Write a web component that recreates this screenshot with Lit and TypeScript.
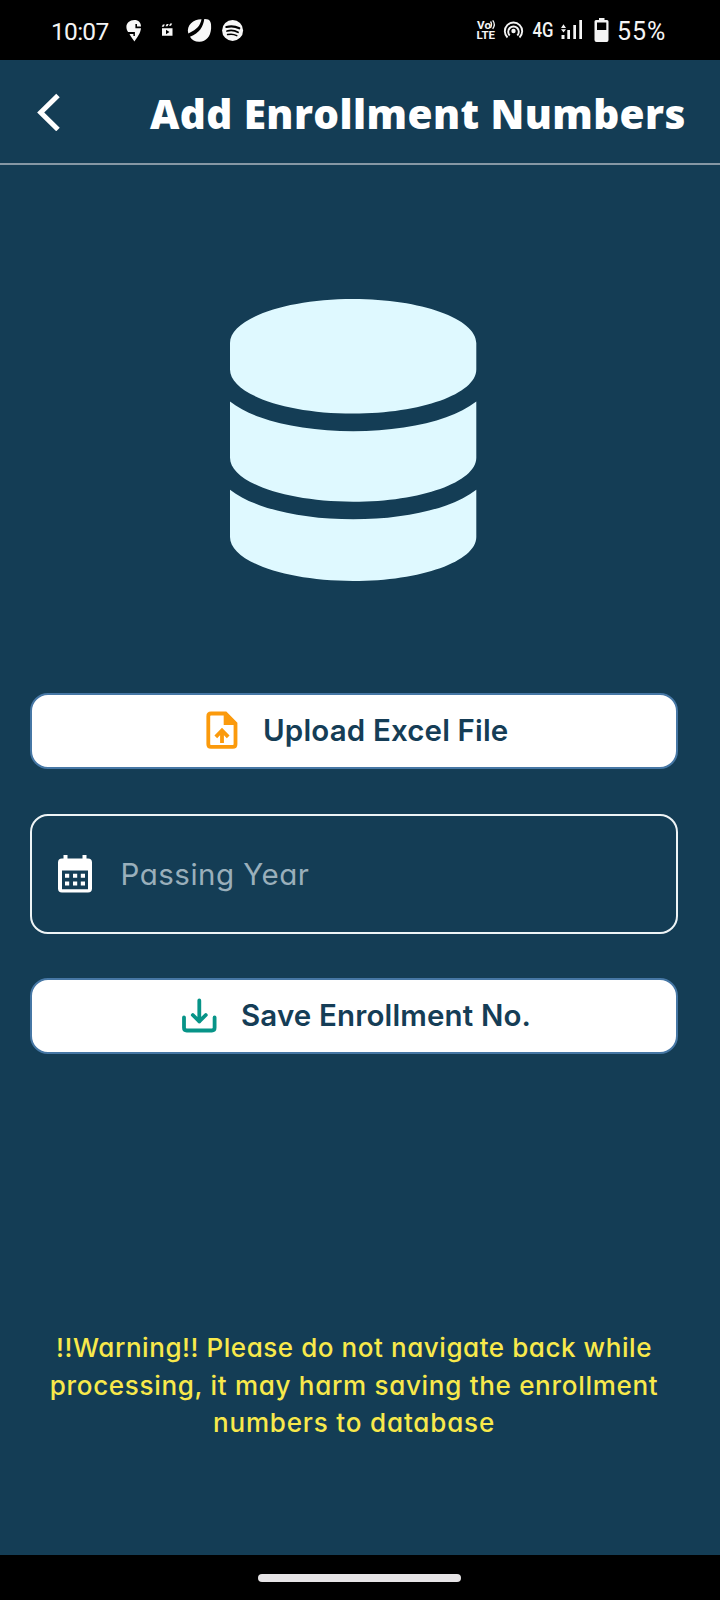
import { LitElement, html, css } from "lit";
import { customElement } from "lit/decorators.js";

@customElement("status-bar")
class StatusBar extends LitElement {
  static styles = css`
    :host { display: flex; align-items: center; height: 60px; background: #000; color: #f4f4f4; font-family: Roboto, sans-serif; white-space: nowrap; }
    svg { display: block; flex: none; }
    .time { width: 74px; margin-left: 51px; font-size: 24.5px; line-height: 30px; padding-top: 3px; letter-spacing: -0.7px; }
    .left { flex: none; }
    .right { margin-left: auto; margin-right: 7px; flex: none; }
    .pct { width: 104px; margin-right: -1px; font-size: 25px; line-height: 30px; padding-top: 4px; letter-spacing: 1px; }
    .tiny { font: 700 11px Roboto, sans-serif; fill: #f4f4f4; }
    .net { font: 500 19.5px Roboto, sans-serif; fill: #f4f4f4; }
  `;
  render() {
    return html`
      <span class="time">10:07</span>
      <svg class="left" width="125" height="60" viewBox="125 0 125 60" fill="#f8f8f8">
        <path d="M134.5 20c4 0 6.4 2.6 6.5 6.5h-4v-2.6h-1.6v4.3H141c-.5 5-4 9.500-6.600 13.200-2.100-2.900-4.100-5.900-4.900-7.500h3.900v2.100h1.500v-4h-6.800C124 26 127.800 20 134.500 20z" />
        <path d="M162 28.300h10.500v7.400H162zM161.700 26.800l1.200-2.200h2l-1.200 2.200zM165.500 26.300l1.200-2.200h2l-1.200 2.200zM169 25.800l1.200-2.200h2l-1.200 2.200z" />
        <path d="M166 29.800l3.500 2.200-3.500 2.200z" fill="#000" />
        <path d="M188.300 33.500C186 25 194 19 201.500 19.200c-1.300 6-3.600 9.600-13.200 14.300zM204.300 19.100c6-.2 7.200 3 6.800 9.500-.5 8-5 13-11.500 13.200-4.500.1-7.600-1.300-9.600-5C199.500 33 203.200 27 204.300 19.100z" />
        <circle cx="232.600" cy="30.400" r="10.500" />
        <g fill="none" stroke="#000" stroke-linecap="round"><path d="M226.300 27q7-1.800 13 1.300" stroke-width="2.100" /><path d="M227 31q6-1.500 11 1.200" stroke-width="1.800" /><path d="M227.600 34.600q5-1.200 9.200 1" stroke-width="1.500" /></g>
      </svg>
      <svg class="right" width="140" height="60" viewBox="470 0 140 60" fill="#f4f4f4">
        <text class="tiny" x="477" y="28.500" textLength="14" lengthAdjust="spacingAndGlyphs">Vo</text>
        <text class="tiny" x="476.500" y="39" textLength="18.500" lengthAdjust="spacingAndGlyphs">LTE</text>
        <g fill="none" stroke="#f4f4f4" stroke-width="1.300"><path d="M490.500 21.500q2 2.700 0 6.500M492.700 20.300q3.200 4 0 8.500" /></g>
        <circle cx="513.500" cy="31" r="2.200" />
        <g fill="none" stroke="#f4f4f4" stroke-width="1.900"><path d="M509.700 35.500a5.300 5.300 0 1 1 7.600 0" /><path d="M507.500 37.500a8.700 8.700 0 1 1 12 0" /></g>
        <text class="net" x="532.500" y="36.500" textLength="21" lengthAdjust="spacingAndGlyphs">4G</text>
        <path d="M561 28l2.500-3.800L566 28zM561 29.200h5l-2.500 3.300zM561.500 35h3v4h-3zM567.300 30h2.700v9h-2.700zM573.300 25h2.700v14h-2.700zM579.300 20h2.700v19h-2.700z" />
        <path fill-rule="evenodd" d="M599 18h5.500v2h2.500q1.500 0 1.500 1.500v18.500q0 2-1.800 2h-10.200q-2 0-2-2v-18.500q0-1.500 1.500-1.500h3zM597 22.500v7.500h9.300v-7.500z" />
      </svg>
      <span class="pct">55%</span>
    `;
  }
}

@customElement("app-root")
class AppRoot extends LitElement {
  static styles = css`
    :host { display: flex; flex-direction: column; width: 720px; height: 1600px; background: #143d55; overflow: hidden; }
    * { box-sizing: border-box; }
    svg { display: block; flex: none; }
    .bar { display: flex; align-items: center; height: 105px; border-bottom: 2px solid #8698a5; flex: none; }
    .back { margin-left: 36px; margin-top: 1px; }
    .title { margin: 0 0 0 89px; padding-top: 5px; font: 800 40.500px/56px "Open Sans", sans-serif; letter-spacing: 0.42px; color: #fff; white-space: nowrap; }
    main { flex: 1; display: flex; flex-direction: column; padding: 0 42px 0 30px; }
    .db { margin: 134px 0 0 200.400px; }
    .btn { display: flex; align-items: center; height: 76px; border: 2px solid #4677a5; border-radius: 18px; background: #fff; color: #153d56; padding: 0 0 2px; font: 600 29.500px/36px Inter, sans-serif; letter-spacing: 0.15px; white-space: nowrap; flex: none; text-align: left; }
    .upload { margin-top: 112px; padding-left: 174px; gap: 25px; }
    .save { margin-top: 44px; padding-left: 150px; gap: 24px; }
    .field { display: flex; align-items: center; gap: 28.500px; height: 120px; margin-top: 45px; padding-left: 26px; border: 2px solid #eef4f6; border-radius: 18px; font: 430 29.500px/36px Inter, sans-serif; letter-spacing: 0.5px; font-feature-settings: "cv11"; color: #9aafbb; flex: none; }
    .warn { margin: 275px 0 0; text-align: center; font: 450 26px/37.500px Inter, sans-serif; font-feature-settings: "cv11"; color: #f8e94b; white-space: nowrap; }
    .line { display: block; letter-spacing: 0.56px; }
    .middle { letter-spacing: 0.7px; }
    .last { letter-spacing: 0.84px; }
    .nav { height: 45px; background: #000; display: flex; justify-content: center; align-items: center; padding: 0 2px 0 0; flex: none; }
    .pill { width: 203px; height: 8px; border-radius: 4px; background: #e6e4e6; }
  `;
  render() {
    return html`
      <status-bar></status-bar>
      <header class="bar">
        <svg class="back" width="25" height="38" viewBox="36 93 25 38"><path d="M58 95.500L40.700 112.500L58 129.500" fill="none" stroke="#fff" stroke-width="5" /></svg>
        <h1 class="title">Add Enrollment Numbers</h1>
      </header>
      <main>
        <svg class="db" width="246.300" height="282" viewBox="0 0 448 512" preserveAspectRatio="none" fill="#dff9ff">
          <path d="M448 80v48c0 44.200-100.300 80-224 80S0 172.200 0 128V80C0 35.800 100.300 0 224 0S448 35.800 448 80zM393.200 214.700c20.800-7.400 39.900-16.900 54.800-28.600V288c0 44.200-100.300 80-224 80S0 332.200 0 288V186.100c14.900 11.800 34 21.200 54.800 28.600C99.700 230.700 159.500 240 224 240s124.300-9.300 169.200-25.300zM0 346.100c14.900 11.800 34 21.200 54.800 28.600C99.700 390.700 159.500 400 224 400s124.300-9.300 169.200-25.300c20.800-7.400 39.900-16.900 54.800-28.600V432c0 44.200-100.300 80-224 80S0 476.200 0 432V346.100z" />
        </svg>
        <button class="btn upload">
          <svg width="32" height="38" viewBox="206 711 32 38">
            <path d="M225.500 713.500H211q-2.700 0-2.700 2.700v28q0 2.700 2.700 2.700h21.800q2.700 0 2.700-2.700v-20.700z" fill="none" stroke="#fb9a0c" stroke-width="3.800" />
            <path d="M223.700 712.500h2.500l10.500 10.500v2h-13z" fill="#fb9a0c" />
            <path d="M222 743v-11M215.800 736.800l6.200-6.300 6.200 6.300" fill="none" stroke="#fb9a0c" stroke-width="3.800" />
          </svg>
          <span>Upload Excel File</span>
        </button>
        <div class="field">
          <svg width="34" height="38" viewBox="58 854.500 34 38" fill="#fff">
            <path fill-rule="evenodd" d="M63.500 854.500h4v3.500h15v-3.500h4v3.500h1.500q4 0 4 4v26q0 4-4 4h-26q-4 0-4-4v-26q0-4 4-4h1.500zM62 870v18.700h26v-18.700z" />
            <path d="M65 873.300h4.200v4h-4.200zM73 873.300h4.200v4h-4.200zM80.800 873.300h4.200v4h-4.200zM65 881h4.200v4h-4.200zM73 881h4.200v4h-4.200zM80.800 881h4.200v4h-4.200z" />
          </svg>
          <span>Passing Year</span>
        </div>
        <button class="btn save">
          <svg width="35" height="35" viewBox="182 998 35 35" fill="none" stroke="#079488" stroke-width="3.800" stroke-linecap="round" stroke-linejoin="round">
            <path d="M184 1017.500v10.300q0 2.700 2.700 2.700h25.200q2.700 0 2.700-2.700v-10.300M199.300 1000.500v21M192.800 1015l6.500 6.500 6.500-6.500" />
          </svg>
          <span>Save Enrollment No.</span>
        </button>
        <p class="warn">
          <span class="line">!!Warning!! Please do not navigate back while</span>
          <span class="line middle">processing, it may harm saving the enrollment</span>
          <span class="line last">numbers to database</span>
        </p>
      </main>
      <footer class="nav"><div class="pill"></div></footer>
    `;
  }
}
